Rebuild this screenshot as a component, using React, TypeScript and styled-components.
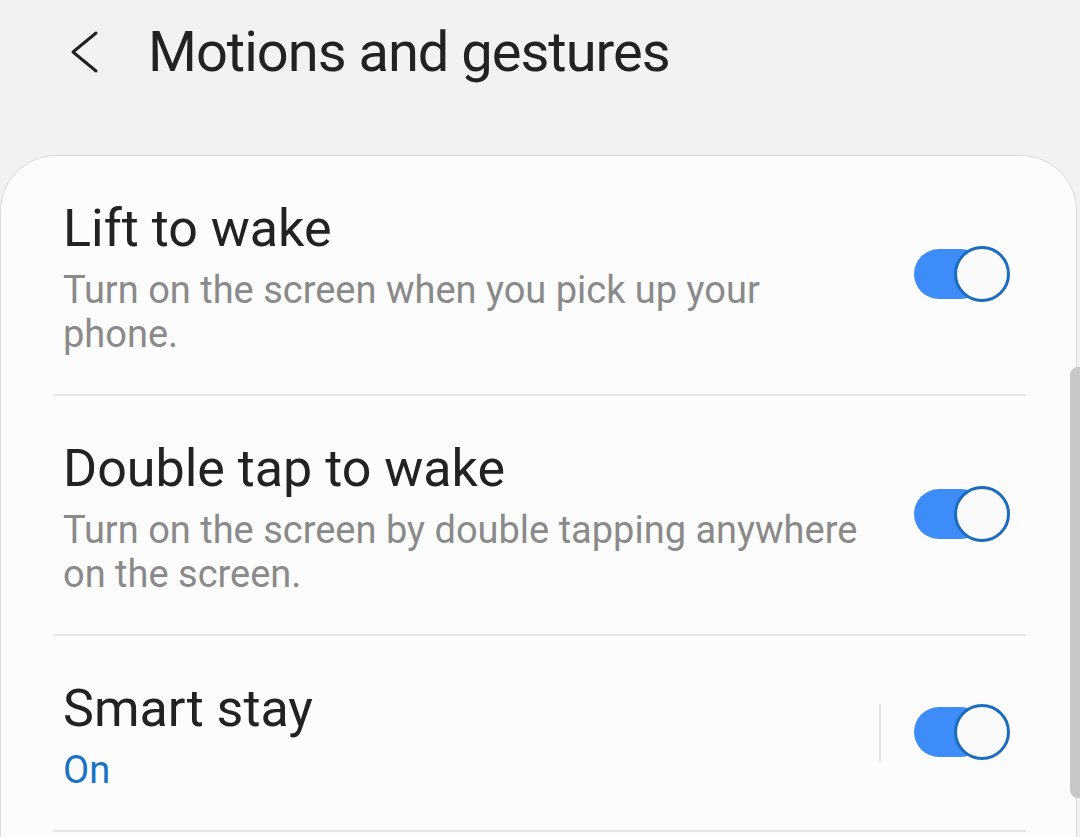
import React from "react";
import styled, { createGlobalStyle } from "styled-components";

const Global = createGlobalStyle`
  html, body { margin: 0; padding: 0; }
  body {
    background: #f2f2f2;
    font-family: Roboto, "Noto Sans", "Liberation Sans", sans-serif;
    width: 1080px;
    height: 837px;
    overflow: hidden;
  }
`;

const Screen = styled.div`
  position: relative;
  width: 1080px;
  height: 837px;
  overflow: hidden;
  background: #f2f2f2;
`;

const Header = styled.header`
  display: flex;
  align-items: center;
  height: 103px;
  padding-left: 66px;
  padding-bottom: 52px;
  box-sizing: content-box;
`;

const BackButton = styled.button`
  display: flex;
  align-items: center;
  justify-content: center;
  width: 36px;
  height: 48px;
  padding: 0;
  margin-right: 46px;
  border: none;
  background: transparent;
  color: #222;
`;

const Title = styled.h1`
  margin: 0;
  font-size: 56px;
  font-weight: 400;
  color: #222;
  letter-spacing: -1px;
  line-height: 1;
`;

const Card = styled.section`
  width: 1077px;
  min-height: 800px;
  background: #fcfcfc;
  border: 1px solid #dcdcdc;
  border-bottom: none;
  border-radius: 56px 56px 0 0;
  box-sizing: border-box;
  padding: 0 50px 0 52px;
`;

const Row = styled.div`
  display: flex;
  align-items: center;
  padding: 42px 16px 38px 10px;
  border-bottom: 2px solid #e6e6e6;
`;

const TextBlock = styled.div`
  flex: 1;
  display: flex;
  flex-direction: column;
  gap: 8px;
  max-width: 805px;
`;

const RowTitle = styled.div`
  font-size: 52px;
  line-height: 62px;
  color: #222;
`;

const RowSub = styled.div<{ $accent?: boolean }>`
  font-size: 38px;
  line-height: 44px;
  color: ${(p) => (p.$accent ? "#1a72c4" : "#8a8a8a")};
`;

const Controls = styled.div`
  display: flex;
  align-items: center;
  margin-left: auto;
  margin-bottom: 6px;
`;

const VSep = styled.div`
  width: 2px;
  height: 57px;
  background: #e2e2e2;
  margin-right: 33px;
`;

const Switch = styled.div`
  position: relative;
  width: 96px;
  height: 56px;
`;

const Track = styled.div`
  position: absolute;
  left: 0;
  top: 3px;
  width: 72px;
  height: 50px;
  border-radius: 25px;
  background: #3e8cf7;
`;

const Thumb = styled.div`
  position: absolute;
  right: 0;
  top: 0;
  width: 56px;
  height: 56px;
  box-sizing: border-box;
  border-radius: 50%;
  border: 3px solid #1a6cbf;
  background: #fafafa;
`;

const ScrollBar = styled.div`
  position: absolute;
  right: 0;
  top: 367px;
  width: 10px;
  height: 431px;
  background: #c9c7c5;
  border-radius: 8px 0 0 8px;
`;

const Toggle = () => (
  <Switch>
    <Track />
    <Thumb />
  </Switch>
);

const rows = [
  {
    title: "Lift to wake",
    sub: "Turn on the screen when you pick up your phone.",
  },
  {
    title: "Double tap to wake",
    sub: "Turn on the screen by double tapping anywhere on the screen.",
  },
];

export default function App() {
  return (
    <>
      <Global />
      <Screen>
        <Header>
          <BackButton aria-label="Back">
            <svg width="36" height="48" viewBox="0 0 36 48" fill="none">
              <polyline
                points="30,5 7,24 30,43"
                stroke="#222"
                strokeWidth="3"
                strokeLinecap="round"
                strokeLinejoin="round"
              />
            </svg>
          </BackButton>
          <Title>Motions and gestures</Title>
        </Header>
        <Card>
          {rows.map((r) => (
            <Row key={r.title}>
              <TextBlock>
                <RowTitle>{r.title}</RowTitle>
                <RowSub>{r.sub}</RowSub>
              </TextBlock>
              <Controls>
                <Toggle />
              </Controls>
            </Row>
          ))}
          <Row>
            <TextBlock>
              <RowTitle>Smart stay</RowTitle>
              <RowSub $accent>On</RowSub>
            </TextBlock>
            <Controls>
              <VSep />
              <Toggle />
            </Controls>
          </Row>
        </Card>
        <ScrollBar />
      </Screen>
    </>
  );
}
